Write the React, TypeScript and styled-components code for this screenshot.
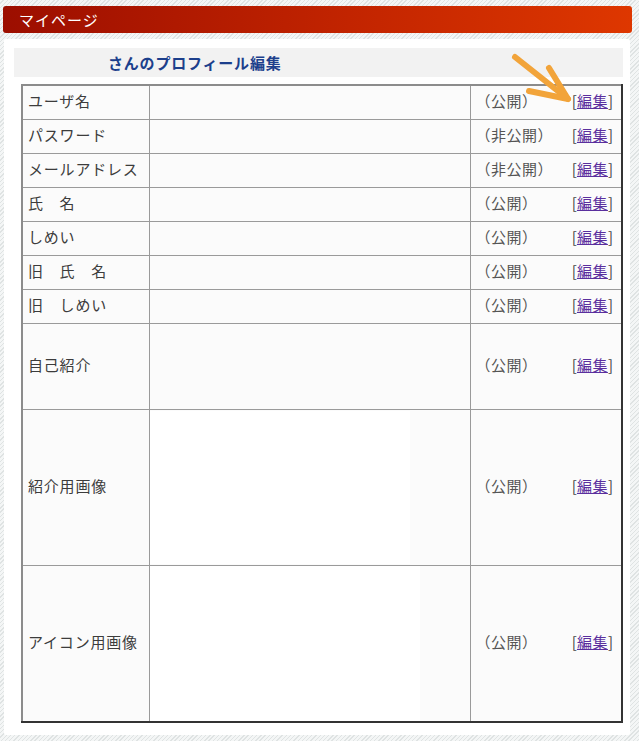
import React from "react";
import styled, { createGlobalStyle } from "styled-components";

const GlobalStyle = createGlobalStyle`
  html, body {
    margin: 0;
    padding: 0;
  }
  body {
    font-family: "Noto Sans CJK JP", "Noto Sans", sans-serif;
    color: #333;
    background-color: #eef0f0;
    background-image: repeating-linear-gradient(
      135deg,
      #f4f6f6 0px,
      #f4f6f6 2px,
      #dfe3e3 2px,
      #dfe3e3 3px
    );
    min-height: 741px;
  }
`;

const Page = styled.div`
  width: 639px;
  padding: 6px 0 8px 0;
  box-sizing: border-box;
`;

const Header = styled.h1`
  margin: 0 7px 0 3px;
  height: 27px;
  padding-left: 16px;
  border-radius: 3px;
  background: linear-gradient(to right, #9c0e00 0%, #c22400 55%, #de3700 100%);
  color: #fff;
  font-size: 15px;
  font-weight: normal;
  letter-spacing: 1px;
  line-height: 27px;
`;

const Panel = styled.section`
  position: relative;
  margin: 6px 9px 0 4px;
  padding: 9px 7px 12px 10px;
  background: #fff;
  border-radius: 2px;
`;

const TitleBand = styled.h2`
  margin: 0;
  height: 29px;
  padding-left: 94px;
  background: #f2f2f2;
  color: #1c3f8c;
  font-size: 15px;
  font-weight: bold;
  letter-spacing: 0.8px;
  line-height: 29px;
`;

const Sheet = styled.table`
  width: 600px;
  margin: 7px 2px 0 7px;
  table-layout: fixed;
  border-collapse: collapse;
  border-style: solid;
  border-width: 2px;
  border-color: #8c8c8c #333 #333 #8c8c8c;
`;

const Row = styled.tr<{ $h: number }>`
  height: ${(p) => p.$h}px;
`;

const Cell = styled.td`
  padding: 0 0 3px 0;
  border: 1px solid #9a9a9a;
  background: #fbfbfb;
  font-size: 15px;
  letter-spacing: 0.8px;
  vertical-align: middle;
`;

const Label = styled(Cell)`
  padding-left: 5px;
  color: #3c3c3c;
  white-space: nowrap;
`;

const Value = styled(Cell)`
  padding: 0;
`;

const Blank = styled.div<{ $w: number; $h: number }>`
  width: ${(p) => p.$w}px;
  height: ${(p) => p.$h}px;
  background: #fff;
`;

const StatusLine = styled.div`
  display: flex;
  align-items: center;
  justify-content: space-between;
  padding: 0 8px 0 5px;
  color: #555;
  letter-spacing: 0.5px;
`;

const EditLink = styled.span`
  color: #444;
  letter-spacing: 0;
  a {
    color: #5a2f9e;
    text-decoration: underline;
    letter-spacing: 0.5px;
  }
`;

const Pointer = styled.svg`
  position: absolute;
  left: 496px;
  top: 11px;
  pointer-events: none;
`;

type Field = {
  label: string;
  status: string;
  height: number;
  blank?: { w: number; h: number };
};

const fields: Field[] = [
  { label: "ユーザ名", status: "（公開）", height: 34 },
  { label: "パスワード", status: "（非公開）", height: 34 },
  { label: "メールアドレス", status: "（非公開）", height: 34 },
  { label: "氏　名", status: "（公開）", height: 34 },
  { label: "しめい", status: "（公開）", height: 34 },
  { label: "旧　氏　名", status: "（公開）", height: 34 },
  { label: "旧　しめい", status: "（公開）", height: 34 },
  { label: "自己紹介", status: "（公開）", height: 86 },
  { label: "紹介用画像", status: "（公開）", height: 156, blank: { w: 260, h: 153 } },
  { label: "アイコン用画像", status: "（公開）", height: 156, blank: { w: 270, h: 155 } },
];

export default function App() {
  return (
    <>
      <GlobalStyle />
      <Page>
        <Header>マイページ</Header>
        <Panel>
          <TitleBand>さんのプロフィール編集</TitleBand>
          <Sheet>
            <colgroup>
              <col style={{ width: 127 }} />
              <col style={{ width: 321 }} />
              <col style={{ width: 152 }} />
            </colgroup>
            <tbody>
              {fields.map((f) => (
                <Row key={f.label} $h={f.height}>
                  <Label>{f.label}</Label>
                  <Value>{f.blank && <Blank $w={f.blank.w} $h={f.blank.h} />}</Value>
                  <Cell>
                    <StatusLine>
                      <span>{f.status}</span>
                      <EditLink>
                        [<a href="#">編集</a>]
                      </EditLink>
                    </StatusLine>
                  </Cell>
                </Row>
              ))}
            </tbody>
          </Sheet>
          <Pointer width="80" height="60" viewBox="0 0 80 60">
            <g
              fill="none"
              stroke="#f2a43a"
              strokeWidth="6"
              strokeLinecap="round"
              strokeLinejoin="round"
            >
              <path d="M15 7 L68 49" />
              <path d="M49 18 L68 49 L29 41" />
            </g>
          </Pointer>
        </Panel>
      </Page>
    </>
  );
}
